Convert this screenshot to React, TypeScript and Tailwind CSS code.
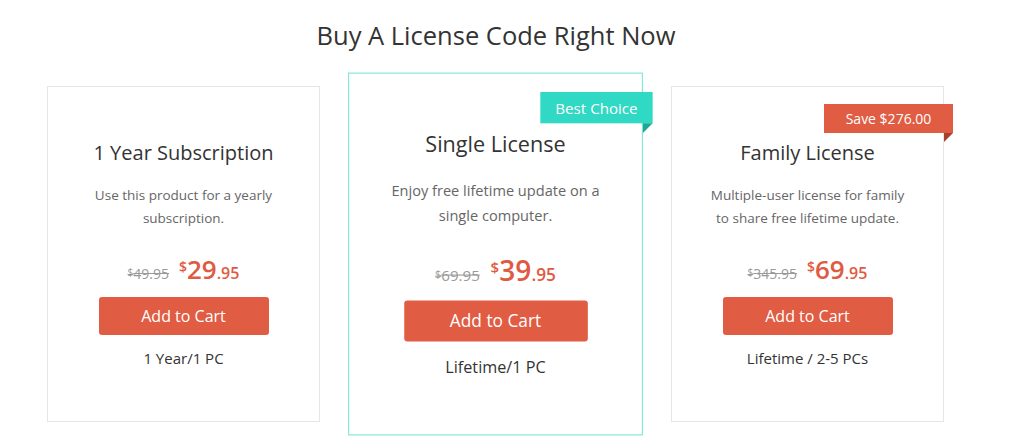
import React from "react";

type Plan = {
  title: string;
  desc: string;
  old: string;
  price: string;
  cents: string;
  note: string;
  featured?: boolean;
  badge?: { text: string; bg: string; fold: string; width: string };
};

const plans: Plan[] = [
  {
    title: "1 Year Subscription",
    desc: "Use this product for a yearly subscription.",
    old: "49.95",
    price: "29",
    cents: ".95",
    note: "1 Year/1 PC",
  },
  {
    title: "Single License",
    desc: "Enjoy free lifetime update on a single computer.",
    old: "69.95",
    price: "39",
    cents: ".95",
    note: "Lifetime/1 PC",
    featured: true,
    badge: { text: "Best Choice", bg: "bg-[#2fd9c3]", fold: "border-t-[#1ea895]", width: "w-[104px]" },
  },
  {
    title: "Family License",
    desc: "Multiple-user license for family to share free lifetime update.",
    old: "345.95",
    price: "69",
    cents: ".95",
    note: "Lifetime / 2-5 PCs",
    badge: { text: "Save $276.00", bg: "bg-[#e05c43]", fold: "border-t-[#a5412f]", width: "w-[129px]" },
  },
];

const PlanCard: React.FC<{ plan: Plan }> = ({ plan }) => {
  return (
    <div
      className={
        plan.featured
          ? "relative w-[273px] h-[336px] shrink-0 bg-white border border-[#78e7d6] scale-[1.08] z-10"
          : "relative w-[273px] h-[336px] shrink-0 bg-white border border-[#e6e6e6]"
      }
    >
      {plan.badge && (
        <div className="absolute top-[17px] -right-[10px]">
          <div
            className={`${plan.badge.bg} ${plan.badge.width} h-[29px] flex items-center justify-center text-white text-[14px] leading-none`}
          >
            {plan.badge.text}
          </div>
          <div
            className={`ml-auto w-0 h-0 border-t-[9px] ${plan.badge.fold} border-r-[9px] border-r-transparent`}
          />
        </div>
      )}

      <div className="flex flex-col items-center pt-[52px] text-center">
        <h2 className="text-[20px] leading-[28px] text-[#333]">{plan.title}</h2>
        <p className="mt-[17px] w-[206px] text-[13.5px] leading-[23px] text-[#666]">{plan.desc}</p>
        <div className="mt-[20px] h-[32px] flex items-baseline justify-center gap-[10px]">
          <span className="text-[14px] text-[#999] line-through">
            <span className="text-[10px] align-[3px]">$</span>
            {plan.old}
          </span>
          <span className="text-[#e05a43] font-semibold">
            <span className="text-[14px] align-[7px]">$</span>
            <span className="text-[26px]">{plan.price}</span>
            <span className="text-[16px]">{plan.cents}</span>
          </span>
        </div>
        <button className="mt-[15px] w-[170px] h-[38px] rounded-[3px] bg-[#e05c43] text-white text-[16px]">
          Add to Cart
        </button>
        <p className="mt-[12px] text-[15px] leading-[22px] text-[#333]">{plan.note}</p>
      </div>
    </div>
  );
};

export default function App() {
  return (
    <div className="w-[1024px] h-[448px] bg-white overflow-hidden font-['Open_Sans',sans-serif]">
      <div className="w-[945px] pl-[47px]">
        <h1 className="pt-[17px] text-center text-[25.5px] leading-[36px] text-[#333]">
          Buy A License Code Right Now
        </h1>
        <div className="mt-[33px] flex gap-[39px]">
          {plans.map((p) => (
            <PlanCard key={p.title} plan={p} />
          ))}
        </div>
      </div>
    </div>
  );
}
